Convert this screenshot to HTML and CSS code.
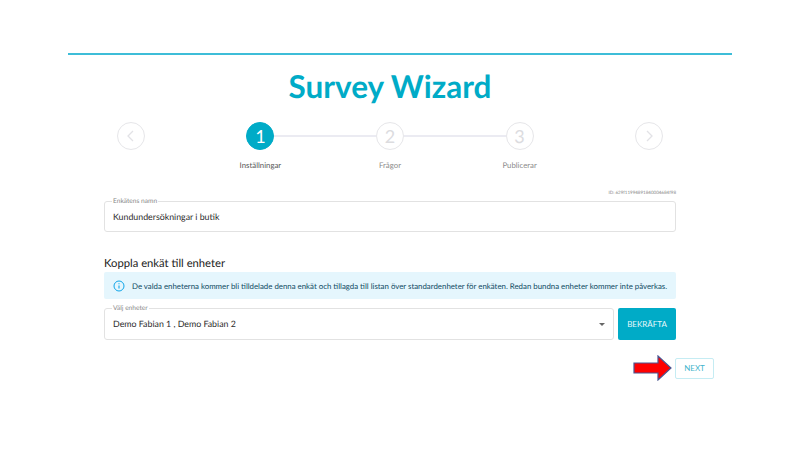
FILE: index.html
```html
<!DOCTYPE html>
<html lang="sv">
<head>
<meta charset="utf-8">
<title>Survey Wizard</title>
<link rel="stylesheet" href="styles.css">
</head>
<body>
<div class="rule"></div>
<main class="wizard">
  <h1 class="title">Survey Wizard</h1>
  <div class="steps">
    <div class="step">
      <div class="circle"><svg width="12" height="14" viewBox="0 0 12 14"><path d="M8 2 3 7l5 5" fill="none" stroke="#e2e2e6" stroke-width="1.3"/></svg></div>
    </div>
    <div class="step">
      <div class="circle active">1</div>
      <div class="step-label strong">Inställningar</div>
    </div>
    <div class="step">
      <div class="circle">2</div>
      <div class="step-label">Frågor</div>
    </div>
    <div class="step">
      <div class="circle">3</div>
      <div class="step-label">Publicerar</div>
    </div>
    <div class="step">
      <div class="circle"><svg width="12" height="14" viewBox="0 0 12 14"><path d="m4 2 5 5-5 5" fill="none" stroke="#e2e2e6" stroke-width="1.3"/></svg></div>
    </div>
  </div>
  <div class="form">
    <div class="id">ID: 629f11994891840004684f98</div>
    <fieldset class="field">
      <legend>Enkätens namn</legend>
      <div class="value">Kundundersökningar i butik</div>
    </fieldset>
    <h2 class="heading">Koppla enkät till enheter</h2>
    <div class="alert">
      <svg class="info" width="12" height="12" viewBox="0 0 12 12"><circle cx="6" cy="6" r="5" fill="none" stroke="#0ea5e9" stroke-width="1"/><path d="M6 5.4v3M6 3.2v1.1" stroke="#0ea5e9" stroke-width="1.1" fill="none"/></svg>
      <span>De valda enheterna kommer bli tilldelade denna enkät och tillagda till listan över standardenheter för enkäten. Redan bundna enheter kommer inte påverkas.</span>
    </div>
    <div class="select-row">
      <fieldset class="field select">
        <legend>Välj enheter</legend>
        <div class="value">Demo Fabian 1 , Demo Fabian 2</div>
        <span class="caret"></span>
      </fieldset>
      <button class="confirm">BEKRÄFTA</button>
    </div>
  </div>
  <div class="nav">
    <svg class="arrow" width="39" height="26" viewBox="0 0 39 26"><path d="M1 8h24V1l13 12-13 12v-7H1z" fill="#f00" stroke="#4a5590" stroke-width="1.2"/></svg>
    <button class="next">NEXT</button>
  </div>
</main>
</body>
</html>
```

FILE: styles.css
```css
* { box-sizing: border-box; }
html, body { margin: 0; padding: 0; background: #fff; }
body { width: 800px; height: 450px; overflow: hidden; font-family: Lato, sans-serif; color: #2b2b2b; padding-top: 53px; text-rendering: geometricPrecision; }
.rule { height: 2px; margin: 0 68px; background: #3dbdd8; }
.wizard { width: 648px; margin-left: 66px; }
.title { margin: 10px 0 0; height: 43px; line-height: 43px; font-size: 31.5px; font-weight: 700; color: #00abc7; text-align: center; }
.steps { display: grid; grid-template-columns: repeat(5, 1fr); margin-top: 14px; height: 60px; }
.step { position: relative; display: flex; flex-direction: column; align-items: center; }
.step:nth-child(2)::after, .step:nth-child(3)::after { content: ""; position: absolute; top: 13px; left: calc(50% + 14px); width: calc(100% - 28px); height: 1.5px; background: #ebebf2; }
.circle { width: 28px; height: 28px; border-radius: 50%; border: 1px solid #e6e6e9; display: flex; align-items: center; justify-content: center; font-size: 18px; color: #dcdcdf; background: #fff; }
.circle.active { background: #00abc7; border-color: #00abc7; color: #fff; font-weight: 400; }
.step-label { margin-top: 9px; font-size: 7.8px; line-height: 12px; color: #8a8a8a; }
.step-label.strong { color: #555; }
.form { padding: 0 38px; }
.id { margin-top: 7px; height: 8px; line-height: 8px; font-size: 4.5px; color: #888; text-align: right; }
.field { margin: 0; padding: 0 7px; border: 1px solid #e2e2e2; border-radius: 3px; height: 35px; min-width: 0; position: relative; }
.field legend { margin-left: 0; padding: 0 1px; font-size: 6.6px; line-height: 8px; color: #888; }
.value { font-size: 8.8px; line-height: 14px; margin-top: 5px; margin-left: 1px; color: #2a2a2a; }
.heading { margin: 24px 0 0; font-size: 11.25px; line-height: 16px; font-weight: 400; color: #222; }
.alert { display: flex; align-items: center; gap: 7px; margin-top: 0; height: 27px; padding-left: 9px; background: #e5f6fd; border-radius: 2px; font-size: 7.85px; color: #0f4a63; white-space: nowrap; }
.info { flex: none; }
.select-row { display: flex; gap: 4px; margin-top: 5px; }
.select { flex: 1; height: 36px; }
.caret { position: absolute; right: 8px; top: 11px; border-left: 3px solid transparent; border-right: 3px solid transparent; border-top: 3px solid #666; }
.confirm { width: 58px; height: 32px; margin-top: 4px; border: 0; border-radius: 2px; background: #00abc7; color: #e6f7fa; font: 400 8px Lato, sans-serif; padding: 0; }
.nav { display: flex; justify-content: flex-end; align-items: center; gap: 3px; margin-top: 15px; }
.next { width: 39px; height: 21px; border: 1px solid #c5ecf3; border-radius: 2px; background: #fff; color: #45b5cc; font: 400 8px Lato, sans-serif; padding: 0; }
```
